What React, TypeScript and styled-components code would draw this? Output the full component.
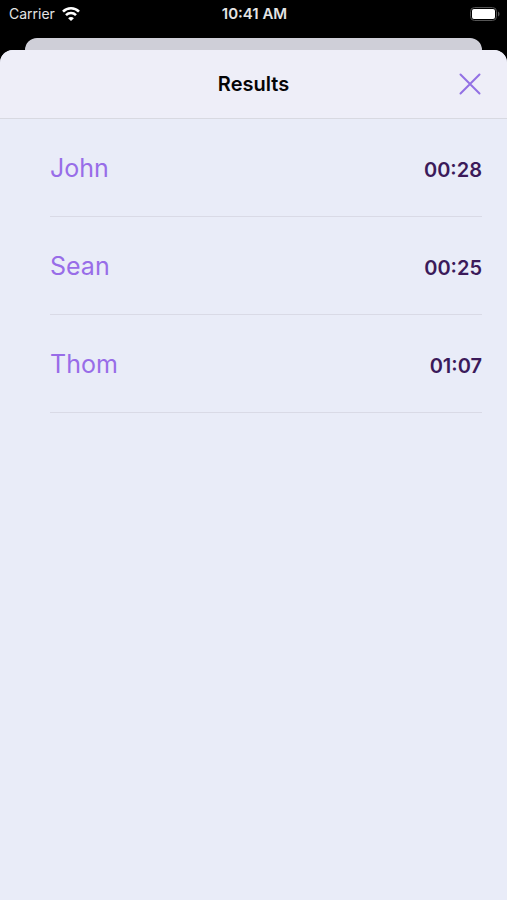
import React from "react";
import styled, { createGlobalStyle } from "styled-components";

const Global = createGlobalStyle`
  * { box-sizing: border-box; }
  body { margin: 0; background: #000; font-family: Inter, "Liberation Sans", sans-serif; }
  h1, ul { margin: 0; padding: 0; }
`;

const Screen = styled.div`
  min-height: 100vh;
  display: flex;
  flex-direction: column;
  background: #000;
`;

const StatusBar = styled.header`
  height: 38px;
  padding: 0 7px 10px 9px;
  display: grid;
  grid-template-columns: 1fr auto 1fr;
  align-items: center;
  color: #e4e4e4;
  font-size: 14px;
  line-height: 20px;
`;

const Carrier = styled.div`
  display: flex;
  align-items: center;
  gap: 7px;
`;

const Clock = styled.time`
  font-size: 15px;
  font-weight: 600;
`;

const Battery = styled.svg`
  justify-self: end;
`;

const BackCard = styled.div`
  height: 12px;
  margin: 0 25px;
  border-radius: 12px 12px 0 0;
  background: #cfcfd8;
`;

const Sheet = styled.main`
  flex: 1;
  border-radius: 13px 13px 0 0;
  background: #e9ecf8;
  overflow: hidden;
`;

const TitleBar = styled.div`
  height: 69px;
  padding: 0 25px;
  display: grid;
  grid-template-columns: 1fr auto 1fr;
  align-items: center;
  background: #eeeef8;
  border-bottom: 1px solid #d8d9e1;
`;

const Title = styled.h1`
  grid-column: 2;
  color: #050507;
  font-size: 20px;
  line-height: 24px;
  font-weight: 600;
`;

const CloseButton = styled.button`
  justify-self: end;
  display: flex;
  padding: 0;
  border: 0;
  background: none;
  color: #9270e4;
`;

const ResultList = styled.ul`
  padding: 0 25px 0 50px;
  list-style: none;
`;

const ResultRow = styled.li`
  height: 98px;
  padding-top: 33px;
  display: flex;
  align-items: baseline;
  justify-content: space-between;
  border-bottom: 1px solid #d9dae6;
`;

const Name = styled.span`
  color: #986de8;
  font-size: 25px;
  line-height: 32px;
`;

const Score = styled.span`
  color: #3b1a5a;
  font-size: 20px;
  line-height: 28px;
  font-weight: 600;
`;

const results = [
  { name: "John", time: "00:28" },
  { name: "Sean", time: "00:25" },
  { name: "Thom", time: "01:07" },
];

export default function App() {
  return (
    <Screen>
      <Global />
      <StatusBar>
        <Carrier>
          <span>Carrier</span>
          <svg width="18" height="14" viewBox="0 0 18 14" fill="none" stroke="#fff" strokeWidth="2.6" aria-label="Wi-Fi">
            <path d="M1 4.600C5.500.200 12.500.200 17 4.600M4 8.100c2.800-2.800 7.200-2.800 10 0" />
            <path d="M9 14 6.100 11.200c1.600-1.700 4.200-1.700 5.800 0z" fill="#fff" stroke="none" />
          </svg>
        </Carrier>
        <Clock>10:41 AM</Clock>
        <Battery width="30" height="14" viewBox="0 0 30 14" aria-label="Battery full">
          <rect x="0.500" y="0.500" width="26" height="13" rx="4" fill="none" stroke="#555" />
          <rect x="2" y="2" width="23" height="10" rx="2" fill="#fff" />
          <path d="M28 4.500c2 .800 2 4.200 0 5z" fill="#555" />
        </Battery>
      </StatusBar>
      <BackCard />
      <Sheet>
        <TitleBar>
          <Title>Results</Title>
          <CloseButton type="button" aria-label="Close">
            <svg width="24" height="24" viewBox="0 0 24 24" fill="none" stroke="currentColor" strokeWidth="2" strokeLinecap="round">
              <path d="M2.500 2.500 21.500 21.500M21.500 2.500 2.500 21.500" />
            </svg>
          </CloseButton>
        </TitleBar>
        <ResultList>
          {results.map((result) => (
            <ResultRow key={result.name}>
              <Name>{result.name}</Name>
              <Score>{result.time}</Score>
            </ResultRow>
          ))}
        </ResultList>
      </Sheet>
    </Screen>
  );
}
